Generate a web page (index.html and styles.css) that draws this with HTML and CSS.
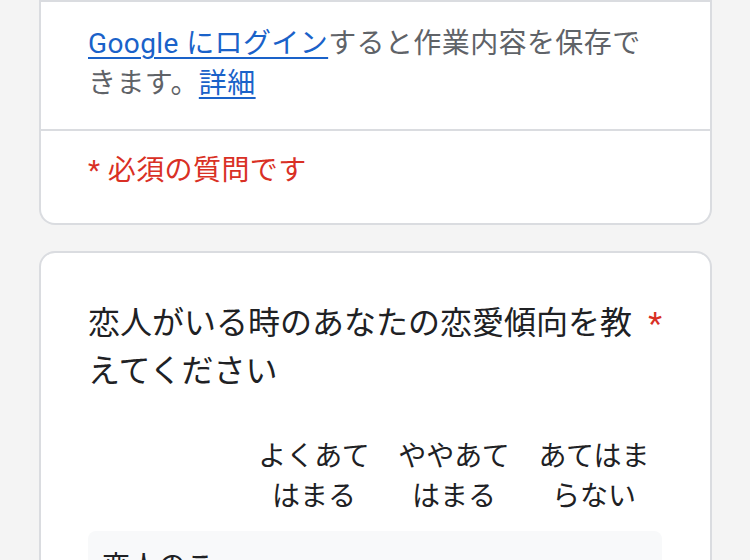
FILE: index.html
```html
<!DOCTYPE html>
<html lang="ja">
<head>
<meta charset="utf-8">
<title>フォーム</title>
<link rel="stylesheet" href="styles.css">
</head>
<body>
<div class="page">
  <div class="card card-top">
    <div class="section login">
      <p class="desc"><a class="link" href="#">Google にログイン</a>すると作業内容を保存できます。<a class="link" href="#">詳細</a></p>
    </div>
    <div class="section required">
      <span class="req-text">* 必須の質問です</span>
    </div>
  </div>

  <div class="card question">
    <div class="q-title">
      <span class="q-text">恋人がいる時のあなたの恋愛傾向を教えてください</span>
      <span class="star">*</span>
    </div>
    <div class="grid">
      <div class="grid-head">
        <div class="corner"></div>
        <div class="col-label">よくあてはまる</div>
        <div class="col-label">ややあてはまる</div>
        <div class="col-label">あてはまらない</div>
      </div>
      <div class="grid-row">
        <div class="row-label">恋人のことを一番に考えてしまう</div>
        <div class="cell"><span class="radio"></span></div>
        <div class="cell"><span class="radio"></span></div>
        <div class="cell"><span class="radio"></span></div>
      </div>
    </div>
  </div>
</div>
</body>
</html>
```

FILE: styles.css
```css
* {
  box-sizing: border-box;
}

html, body {
  margin: 0;
  padding: 0;
  background: #f4f4f4;
}

body {
  font-family: Roboto, "Noto Sans CJK JP", sans-serif;
  color: #202124;
  overflow: hidden;
}

.page {
  width: 750px;
  padding: 0 38px 0 39px;
}

.card {
  background: #ffffff;
  border: 2px solid #dadce0;
  border-radius: 16px;
}

.card-top {
  border-top: none;
  border-radius: 0 0 16px 16px;
  margin-bottom: 26px;
}

.section {
  padding: 0 46px 0 47px;
}

.login {
  border-top: 2px solid #dadce0;
  padding-top: 22px;
  padding-bottom: 25px;
}

.desc {
  margin: 0;
  max-width: 556px;
  font-size: 28px;
  line-height: 40px;
  color: #5f6368;
  letter-spacing: 0.4px;
}

.link {
  color: #1a62c9;
  text-decoration: underline;
  text-decoration-thickness: 2px;
  text-underline-offset: 4px;
}

.required {
  border-top: 2px solid #dadce0;
  padding-top: 20px;
  padding-bottom: 32px;
}

.req-text {
  font-size: 28px;
  line-height: 40px;
  color: #d93025;
  letter-spacing: 0.4px;
}

.question {
  padding: 46px 46px 0 47px;
  height: 400px;
}

.q-title {
  display: flex;
  align-items: flex-start;
  font-size: 32px;
  line-height: 48px;
  color: #202124;
}

.q-text {
  flex: 1;
}

.star {
  color: #d93025;
  padding-left: 8px;
  padding-right: 2px;
}

.grid {
  margin-top: 42px;
  width: 576px;
}

.grid-head,
.grid-row {
  display: grid;
  grid-template-columns: 156px 140px 140px 140px;
}

.grid-head {
  padding-bottom: 14px;
}

.col-label {
  padding: 0 8px;
  text-align: center;
  font-size: 28px;
  line-height: 40px;
  color: #202124;
}

.grid-row {
  background: #f8f9fa;
  border-radius: 8px 8px 0 0;
  width: 574px;
}

.row-label {
  padding: 16px 16px 16px 14px;
  font-size: 28px;
  line-height: 40px;
  color: #202124;
}

.cell {
  display: flex;
  align-items: center;
  justify-content: center;
}

.radio {
  width: 40px;
  height: 40px;
  border: 4px solid #5f6368;
  border-radius: 50%;
}
```
